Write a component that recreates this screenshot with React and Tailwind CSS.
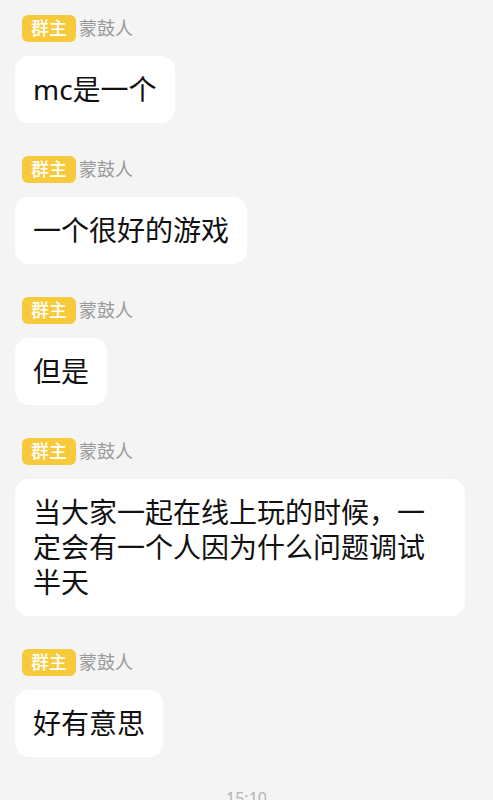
import React from "react";

const messages = [
  "mc是一个",
  "一个很好的游戏",
  "但是",
  "当大家一起在线上玩的时候，一定会有一个人因为什么问题调试半天",
  "好有意思",
];

function Message({ text }) {
  return (
    <div className="flex flex-col items-start mb-[33px]">
      <div className="flex items-center h-[27px] ml-[7px]">
        <span className="h-[27px] px-[9px] rounded-[6px] bg-[#f8c93a] text-white text-[18px] leading-[27px] font-medium">
          群主
        </span>
        <span className="ml-[3px] text-[18px] leading-[27px] text-[#9a9a9a]">蒙鼓人</span>
      </div>
      <div className="mt-[14px] max-w-[450px] bg-white rounded-[14px] px-[18px] py-[16px] text-[28px] leading-[35px] text-[#111111]">
        {text}
      </div>
    </div>
  );
}

export default function App() {
  return (
    <div
      className="w-[493px] h-[800px] overflow-hidden bg-[#f4f4f4] px-[15px] pt-[15px]"
      style={{ fontFamily: '"Noto Sans", "Noto Sans CJK SC", sans-serif' }}
    >
      {messages.map((m, i) => (
        <Message key={i} text={m} />
      ))}
      <div className="text-center text-[16px] leading-[16px] text-[#b5b5b5] mt-[4px]">15:10</div>
    </div>
  );
}
